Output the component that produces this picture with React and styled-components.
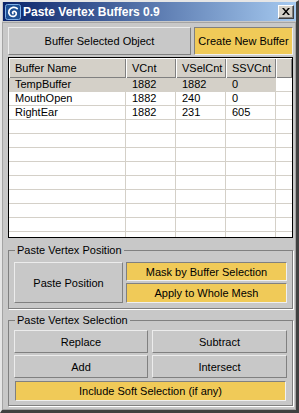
import React from 'react';
import styled, { createGlobalStyle } from 'styled-components';

const GlobalStyle = createGlobalStyle`
  html, body {
    margin: 0;
    padding: 0;
    background: #c8c8c8;
  }
  body {
    font-family: 'Liberation Sans', Arial, sans-serif;
    font-size: 11px;
    color: #000;
  }
`;

const Window = styled.div`
  width: 299px;
  height: 413px;
  box-sizing: border-box;
  background: #c8c8c8;
  border-style: solid;
  border-width: 2px 3px 3px 2px;
  border-color: #e6e6e6 #404040 #404040 #e6e6e6;
  display: flex;
  flex-direction: column;
`;

const TitleBar = styled.div`
  height: 19px;
  margin: 0 0 1px 1px;
  display: flex;
  align-items: center;
  background: linear-gradient(to right, #0a246a, #a6caf0);
`;

const TitleIcon = styled.svg`
  width: 16px;
  height: 16px;
  margin-left: 2px;
  flex: none;
`;

const TitleText = styled.span`
  margin-left: 2px;
  flex: 1;
  color: #fff;
  font-weight: bold;
  font-size: 12px;
  white-space: nowrap;
`;

const CloseButton = styled.div`
  width: 16px;
  height: 14px;
  margin-right: 2px;
  box-sizing: border-box;
  background: #d4d0c8;
  border: 1px solid;
  border-color: #fff #404040 #404040 #fff;
  box-shadow: inset -1px -1px 0 #808080;
  display: flex;
  align-items: center;
  justify-content: center;
`;

const Panel = styled.div`
  flex: 1;
  box-sizing: border-box;
  border: 1px solid #a4a4a4;
  padding: 4px 2px 2px 5px;
  display: flex;
  flex-direction: column;
`;

const TopRow = styled.div`
  display: grid;
  grid-template-columns: 183px 99px;
  column-gap: 3px;
  height: 28px;
`;

const Button = styled.button`
  box-sizing: border-box;
  margin: 0;
  padding: 0;
  font-family: 'Liberation Sans', Arial, sans-serif;
  font-size: 11px;
  color: #000;
  background: ${({ $checked }) => ($checked ? '#f0ca58' : '#c8c8c8')};
  border: 1px solid;
  border-color: ${({ $checked }) =>
    $checked ? '#808080 #f0f0f0 #f0f0f0 #808080' : '#ececec #808080 #808080 #ececec'};
  white-space: nowrap;
`;

const List = styled.div`
  margin-top: 2px;
  height: 181px;
  box-sizing: border-box;
  border: 1px solid #000;
  background: #fff;
  overflow: hidden;
`;

const Row = styled.div`
  display: grid;
  grid-template-columns: 117px 50px 50px 50px 16px;
`;

const HeadCell = styled.div`
  height: 20px;
  box-sizing: border-box;
  padding-left: 6px;
  line-height: 20px;
  background: #d4d0c8;
  box-shadow: inset 1px 1px 0 #fff, inset -1px -1px 0 #808080;
  white-space: nowrap;
`;

const Cell = styled.div`
  height: 14px;
  box-sizing: border-box;
  padding-left: 6px;
  line-height: 13px;
  border-bottom: 1px solid #d4d0c8;
  border-right: ${({ $last }) => ($last ? 'none' : '1px solid #d4d0c8')};
  background: ${({ $selected }) => ($selected ? '#d4d0c8' : '#fff')};
  white-space: nowrap;
`;

const Group = styled.fieldset`
  margin: ${({ $gap }) => $gap}px 0 0 0;
  padding: ${({ $pad }) => $pad};
  min-width: 0;
  border: 1px solid #808080;
  box-shadow: 1px 1px 0 #fff;
`;

const Legend = styled.legend`
  margin-left: 1px;
  padding: 0 2px;
  height: 14px;
  line-height: 14px;
  font-size: 11px;
`;

const PositionGrid = styled.div`
  display: grid;
  grid-template-columns: 109px 1fr;
  grid-template-rows: 19px 20px;
  column-gap: 3px;
  row-gap: 2px;
`;

const SelectionGrid = styled.div`
  display: grid;
  grid-template-columns: 134px 135px;
  grid-template-rows: 23px 23px 21px;
  column-gap: 4px;
  row-gap: 2px;
`;

const TallButton = styled(Button)`
  grid-row: 1 / span 2;
`;

const WideButton = styled(Button)`
  grid-column: 1 / -1;
  margin: 1px 1px 0;
`;

const buffers = [
  { name: 'TempBuffer', v: '1882', sel: '1882', ss: '0' },
  { name: 'MouthOpen', v: '1882', sel: '240', ss: '0' },
  { name: 'RightEar', v: '1882', sel: '231', ss: '605' },
];

const MaxIcon = () => (
  <TitleIcon viewBox="0 0 16 16">
    <rect x="0.5" y="0.5" width="15" height="15" rx="2" fill="#1d4f93" stroke="#7fb0e6" />
    <path
      d="M12.2 4.6 C10.4 2.6 5.6 2.8 4.1 6.4 C2.8 9.8 5.6 13.1 9 12.3 C11.6 11.7 12.2 8.6 10 7.6 C8.4 6.9 6.9 8.3 7.9 9.6"
      fill="none"
      stroke="#fff"
      strokeWidth="1.7"
      strokeLinecap="round"
    />
  </TitleIcon>
);

const CloseGlyph = () => (
  <svg width="8" height="7" viewBox="0 0 8 7">
    <path d="M0 0 H2 L4 2.5 L6 0 H8 L5 3.5 L8 7 H6 L4 4.5 L2 7 H0 L3 3.5 Z" fill="#000" />
  </svg>
);

export default function App() {
  const rows = [...buffers];
  while (rows.length < 12) rows.push(null);

  return (
    <>
      <GlobalStyle />
      <Window>
        <TitleBar>
          <MaxIcon />
          <TitleText>Paste Vertex Buffers 0.9</TitleText>
          <CloseButton>
            <CloseGlyph />
          </CloseButton>
        </TitleBar>
        <Panel>
          <TopRow>
            <Button>Buffer Selected Object</Button>
            <Button $checked>Create New Buffer</Button>
          </TopRow>

          <List>
            <Row>
              <HeadCell>Buffer Name</HeadCell>
              <HeadCell>VCnt</HeadCell>
              <HeadCell>VSelCnt</HeadCell>
              <HeadCell>SSVCnt</HeadCell>
              <HeadCell />
            </Row>
            {rows.map((b, i) => (
              <Row key={i}>
                <Cell $selected={i === 0}>{b && b.name}</Cell>
                <Cell $selected={i === 0}>{b && b.v}</Cell>
                <Cell $selected={i === 0}>{b && b.sel}</Cell>
                <Cell $selected={i === 0}>{b && b.ss}</Cell>
                <Cell $last />
              </Row>
            ))}
          </List>

          <Group $gap={5} $pad="5px 5px 5px 5px">
            <Legend>Paste Vertex Position</Legend>
            <PositionGrid>
              <TallButton>Paste Position</TallButton>
              <Button $checked>Mask by Buffer Selection</Button>
              <Button $checked>Apply to Whole Mesh</Button>
            </PositionGrid>
          </Group>

          <Group $gap={4} $pad="3px 5px 4px 5px">
            <Legend>Paste Vertex Selection</Legend>
            <SelectionGrid>
              <Button>Replace</Button>
              <Button>Subtract</Button>
              <Button>Add</Button>
              <Button>Intersect</Button>
              <WideButton $checked>Include Soft Selection (if any)</WideButton>
            </SelectionGrid>
          </Group>
        </Panel>
      </Window>
    </>
  );
}
